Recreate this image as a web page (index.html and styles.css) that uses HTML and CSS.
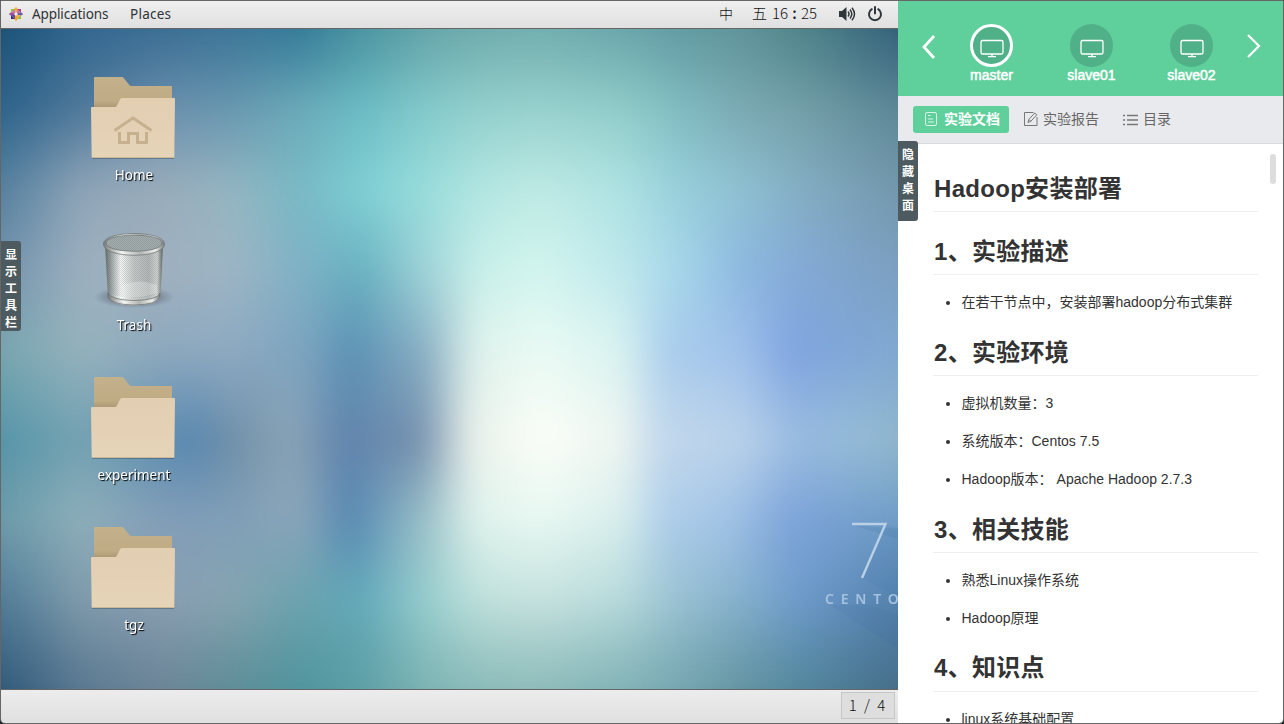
FILE: index.html
```html
<!DOCTYPE html>
<html lang="zh-CN">
<head>
<meta charset="utf-8">
<title>Hadoop安装部署</title>
<link rel="stylesheet" href="styles.css">
</head>
<body>
<svg class="defs" width="0" height="0">
  <defs>
    <linearGradient id="fb" x1="0" y1="0" x2="0" y2="1"><stop offset="0" stop-color="#c3b18b"/><stop offset=".7" stop-color="#bfab84"/><stop offset="1" stop-color="#a3906c"/></linearGradient>
    <linearGradient id="ff" x1="0" y1="0" x2="0" y2="1"><stop offset="0" stop-color="#e2ceb1"/><stop offset="1" stop-color="#e6d4b9"/></linearGradient>
    <linearGradient id="metal" x1="0" x2="1"><stop offset="0" stop-color="#5f6a69"/><stop offset=".12" stop-color="#a5acab"/><stop offset=".27" stop-color="#f6f8f7"/><stop offset=".5" stop-color="#c5cac9"/><stop offset=".75" stop-color="#b3b9b8"/><stop offset=".9" stop-color="#d2d5d4"/><stop offset="1" stop-color="#59625f"/></linearGradient>
    <linearGradient id="rim" x1="0" x2="1"><stop offset="0" stop-color="#777d7c"/><stop offset=".3" stop-color="#f4f4f2"/><stop offset=".6" stop-color="#b4b6b4"/><stop offset=".85" stop-color="#ececea"/><stop offset="1" stop-color="#767b7a"/></linearGradient>
    <pattern id="mesh" width="2" height="2" patternUnits="userSpaceOnUse"><rect width="1" height="1" fill="#59605f"/><rect x="1" y="1" width="1" height="1" fill="#59605f"/></pattern>
    <radialGradient id="shade"><stop offset="0" stop-color="#223" stop-opacity=".6"/><stop offset=".7" stop-color="#334" stop-opacity=".22"/><stop offset="1" stop-color="#334" stop-opacity="0"/></radialGradient>
    <symbol id="folder" viewBox="0 0 84 82">
      <path d="M1 81.500h82" stroke="#35465a" stroke-opacity=".4"/>
      <path d="M4 0h27q1 0 1.700 1l5.600 7q.7 1 1.700 1h40q1 0 1 1v24H3V1q0-1 1-1z" fill="url(#fb)"/>
      <path d="M1 30h23q1 0 1.700-1l3.600-7q.7-1 1.700-1h52q1 0 1 1l-.7 58q0 1-1 1H1.700q-1 0-1-1L0 31q0-1 1-1z" fill="url(#ff)"/>
      <path d="M1 80.500h82" stroke="#cdb997"/>
    </symbol>
    <symbol id="monitor" viewBox="0 0 24 20">
      <rect x="1" y="1.500" width="22" height="13.500" rx="1.500" fill="none" stroke="#fff" stroke-width="1.300"/>
      <path d="M12 15v2.500M8 17.700h8" fill="none" stroke="#fff" stroke-width="1.300"/>
    </symbol>
  </defs>
</svg>
<div class="window">
  <section class="remote">
    <header class="menubar">
      <svg class="logo" width="16" height="16" viewBox="0 0 16 16">
        <path d="M8 7L5.500 4 8 .8 10.500 4z" fill="#efb32d"/><path d="M8 9l-2.500 3L8 15.200 10.500 12z" fill="#efa724"/>
        <path d="M7 8L4 5.500.8 8 4 10.500z" fill="#a04f9b"/><path d="M9 8l3-2.500L15.200 8 12 10.500z" fill="#6a5fa5"/>
        <path d="M3 3h4L3 7z" fill="#91c33a"/><path d="M13 3v4L9 3z" fill="#b63a8c"/><path d="M3 13V9l4 4z" fill="#3b2d7f"/><path d="M13 13H9l4-4z" fill="#92bd47"/>
        <path d="M3 7l4-4v4zM9 3v4h4z" fill="#c86fb0"/><path d="M3 9h4v4z" fill="#5c4c9b"/><path d="M9 13V9h4z" fill="#e9b04a"/>
      </svg>
      <span class="menu apps">Applications</span>
      <span class="menu">Places</span>
      <span class="ime">中</span>
      <span class="clock"><span>五</span><span class="hour">16</span><span class="colon">:</span><span>25</span></span>
      <svg class="volume" width="18" height="16" viewBox="0 0 18 16"><path d="M1 5h3l4.500-4v14L4 11H1z" fill="#30373a"/><path d="M10 5.500q2 2.500 0 5M12 3.500q3.600 4.500 0 9M14 1.700q5 6.300 0 12.600" fill="none" stroke="#30373a" stroke-width="1.500"/></svg>
      <svg class="power" width="16" height="16" viewBox="0 0 16 16"><path d="M4.800 3.200a6 6 0 1 0 6.400 0M8 1v6.500" fill="none" stroke="#30373a" stroke-width="2" stroke-linecap="round"/></svg>
    </header>
    <main class="desktop">
      <div class="wall w0"></div><div class="wall w1"></div><div class="wall w2"></div>
      <div class="wall w3"></div><div class="wall w4"></div><div class="wall w5"></div>
      <div class="wall w6"></div><div class="wall w7"></div><div class="wall w8"></div>
      <div class="soften"></div>
      <div class="icons">
        <div class="item"><svg width="84" height="82"><use href="#folder"/><path d="M23.500 53.500L42 41l18.500 12.500M28.500 55v10.500h9V56.500h9v9h9V55" fill="none" stroke="#c6b18e" stroke-width="3"/></svg><span>Home</span></div>
        <div class="item"><svg width="84" height="82" viewBox="0 0 84 82">
          <ellipse cx="43" cy="70" rx="40" ry="11" fill="url(#shade)"/>
          <path d="M14 17L17 70q3 8 26 8.500Q66 78 69.500 70L72 17z" fill="url(#metal)"/>
          <path d="M14 20L17 66q26 10 52 0L72 20q-29 10-58 0z" fill="url(#mesh)" opacity=".2"/>
          <path d="M17 66q3 7 26 7.500 24-.5 26-7.500l-.3 4.500Q66 77.500 43 78q-23-.5-26-7.500z" fill="url(#rim)" stroke="#626a69" stroke-width=".7"/>
          <path d="M31 58q18-7 35 0v8q-18 6-35 4z" fill="#fff" opacity=".25"/>
          <ellipse cx="43" cy="17" rx="29.500" ry="9.500" fill="#a3acad"/>
          <ellipse cx="43" cy="17" rx="29.500" ry="9.500" fill="url(#mesh)" opacity=".2"/>
          <path d="M12.500 17c0-14 61-14 61 0 0 15-61 15-61 0zm2.500-1c0 11 56 11 56 0 0-10.500-56-10.500-56 0z" fill="url(#rim)" stroke="#666e6d" stroke-width=".7" fill-rule="evenodd"/>
        </svg><span>Trash</span></div>
        <div class="item"><svg width="84" height="82"><use href="#folder"/></svg><span>experiment</span></div>
        <div class="item"><svg width="84" height="82"><use href="#folder"/></svg><span>tgz</span></div>
      </div>
      <div class="brand">
        <svg width="78" height="150" viewBox="820 515 78 150">
          <path d="M852 524l34 1 12 3v70l-36-20 24-53z" fill="#315f98" opacity=".07"/>
          <path d="M852 525l46 4v10z" fill="#315f98" opacity=".12"/>
          <path d="M830 605h40l28 10v34z" fill="#315f98" opacity=".08"/>
          <path d="M852 524h33.500L862 578" fill="none" stroke="#b9d0e5" stroke-width="2.400"/>
        </svg>
        <span>CENTO</span>
      </div>
    </main>
    <footer class="taskbar"><span class="pager">1 / 4</span></footer>
    <div class="toggle tools">显<br>示<br>工<br>具<br>栏</div>
  </section>
  <aside class="panel">
    <nav class="hosts">
      <svg class="prev" width="16" height="28" viewBox="0 0 16 28"><path d="M14 3L4 14l10 11" fill="none" stroke="#fff" stroke-width="2.800"/></svg>
      <div class="host on"><i><svg width="24" height="20"><use href="#monitor"/></svg></i><span>master</span></div>
      <div class="host"><i><svg width="24" height="20"><use href="#monitor"/></svg></i><span>slave01</span></div>
      <div class="host"><i><svg width="24" height="20"><use href="#monitor"/></svg></i><span>slave02</span></div>
      <svg class="next" width="16" height="28" viewBox="0 0 16 28"><path d="M3 3l11 11L3 25" fill="none" stroke="#fff" stroke-width="2.200"/></svg>
    </nav>
    <nav class="tabs">
      <a class="tab active"><svg width="12" height="14" viewBox="0 0 12 14"><rect x=".5" y=".5" width="11" height="13" rx="1.500"/><path d="M3 3.500h2.500M3 7h5M3 10h6"/></svg><span>实验文档</span></a>
      <a class="tab report"><svg width="14" height="14" viewBox="0 0 14 14"><path d="M9.500 .5h-9v13h12.500V5M4 10.500l.7-3L10.800 1l2 1.800-6 6.500zM5 7.500l1.800 1.800"/></svg><span>实验报告</span></a>
      <a class="tab toc"><svg width="15" height="12" viewBox="0 0 15 12"><path d="M0 1.500h2M0 6h2M0 10.500h2M4 1.500h11M4 6h11M4 10.500h11" stroke-width="1.500"/></svg><span>目录</span></a>
    </nav>
    <article class="doc">
      <h2>Hadoop安装部署</h2>
      <h2>1、实验描述</h2>
      <ul><li>在若干节点中，安装部署hadoop分布式集群</li></ul>
      <h2>2、实验环境</h2>
      <ul><li>虚拟机数量：3</li><li>系统版本：Centos 7.5</li><li>Hadoop版本：<span class="ver">Apache Hadoop 2.7.3</span></li></ul>
      <h2>3、相关技能</h2>
      <ul><li>熟悉Linux操作系统</li><li>Hadoop原理</li></ul>
      <h2 class="last">4、知识点</h2>
      <ul><li>linux系统基础配置</li></ul>
    </article>
    <div class="thumb"></div>
    <div class="toggle hide">隐<br>藏<br>桌<br>面</div>
  </aside>
</div>
</body>
</html>
```

FILE: styles.css
```css
* { box-sizing: border-box; }
body { margin: 0; background: #24282b; overflow: hidden; font-family: "Liberation Sans", "Noto Sans CJK SC", sans-serif; font-size: 14px; color: #333; }
svg { display: block; flex: none; }
.defs { position: absolute; }
.window { display: grid; grid-template-columns: 897px 385px; width: 1284px; height: 724px; border: 1px solid #666; border-radius: 0 0 5px 5px; overflow: hidden; }

.remote { position: relative; display: flex; flex-direction: column; height: 722px; min-width: 0; }
.menubar { display: flex; align-items: center; height: 28px; padding: 0 15px 0 7px; border-bottom: 1px solid #666; background: linear-gradient(#efefef, #e0e0e0); color: #2e3436; font-family: "Noto Sans", "Noto Sans CJK SC", sans-serif; }
.logo { margin-bottom: 2px; }
.menu { font-size: 13.5px; letter-spacing: -.1px; padding-bottom: 1px; }
.menu + .menu { letter-spacing: .25px; }
.apps { width: 98px; margin-left: 8px; }
.ime { margin-left: auto; margin-right: 1px; padding-bottom: 4px; color: #111; font: 300 14px "Noto Sans CJK SC", sans-serif; }
.clock { display: flex; width: 70px; margin: 0 16px 0 18px; padding-bottom: 5px; color: #111; font: 300 15px "Noto Sans CJK SC", sans-serif; }
.hour { margin-left: 5px; }
.colon { width: 13px; text-align: center; font-weight: 500; }
.volume { margin-right: 11px; }
.volume, .power { margin-bottom: 2px; }
.desktop { display: grid; grid-template: 100% / 100%; flex: 1; min-height: 0; overflow: hidden; }
.desktop > * { grid-area: 1 / 1; }
.soften { backdrop-filter: blur(14px); }

.w0 { background: linear-gradient(90deg, #1b5277 0, #33678f 80px, #3a6d93 160px, #3d7597 230px, #347a98 300px, #4a93a0 360px, #66a5a9 430px, #6fabac 480px, #72aeae 540px, #6aa5ab 620px, #629ba1 680px, #5f9499 740px, #4f8489 800px, #33607a 897px); }
.w1 { background: linear-gradient(90deg, #2d638c 0, #50799a 80px, #6c90ae 160px, #6998b0 230px, #6cabb9 300px, #6bbcc4 360px, #86cbcc 430px, #93d0cd 480px, #98d2cf 540px, #92cdca 620px, #80bcc1 680px, #7caab3 740px, #74a0a8 800px, #5c8796 897px); mask-image: linear-gradient(transparent 0, #000 81px); }
.w2 { background: linear-gradient(90deg, #54809f 0, #8fa5b8 80px, #9aacba 160px, #95b5c1 230px, #78b9c5 300px, #7fd0d5 360px, #9bdedc 430px, #b3e6e2 480px, #bfeae4 540px, #aee3e3 620px, #98cfdb 680px, #8fc1d2 740px, #84aec4 800px, #7397ac 897px); mask-image: linear-gradient(transparent 81px, #000 161px); }
.w3 { background: linear-gradient(90deg, #7393ad 0, #9db0bf 80px, #a0b0bf 160px, #9eb5c4 230px, #7fb1c5 300px, #67b1c0 360px, #a4d6da 430px, #c9f0ea 480px, #d3f5ef 540px, #bfe8ec 620px, #a6d6ea 680px, #8db8e0 740px, #84aad6 800px, #7b9fc0 897px); mask-image: linear-gradient(transparent 161px, #000 241px); }
.w4 { background: linear-gradient(90deg, #78a7b0 0, #96b2bd 80px, #8ea8bd 160px, #8eaac2 230px, #7ca4bf 305px, #5a91b4 350px, #8bb0c4 425px, #dff2ec 475px, #eafaf4 540px, #d9f3f0 620px, #aacdec 665px, #9fc1ea 740px, #7fa4e1 790px, #80a9d0 897px); mask-image: linear-gradient(transparent 241px, #000 321px); }
.w5 { background: linear-gradient(90deg, #5495a9 0, #74a2b2 80px, #5686b0 190px, #7190a8 235px, #8ba4b6 290px, #6083ad 345px, #7590ad 420px, #e9f0ea 470px, #fcfef8 540px, #eef5f0 620px, #c3d8ec 660px, #bad2ea 740px, #98bbe0 800px, #96bcd6 860px, #8fb5cb 897px); mask-image: linear-gradient(transparent 321px, #000 411px); }
.w6 { background: linear-gradient(90deg, #6c9baa 0, #8fafba 80px, #839eb8 160px, #809fb8 230px, #8aa6ba 300px, #5588b2 350px, #9cc2c9 425px, #dff2ec 475px, #e8f8f2 540px, #d8eeec 620px, #adcdea 665px, #a2c4e6 725px, #7da4da 790px, #6f9cc6 897px); mask-image: linear-gradient(transparent 411px, #000 491px); }
.w7 { background: linear-gradient(90deg, #4f7c98 0, #809bab 80px, #8a9eb2 160px, #86a4b0 230px, #6ba3ae 300px, #62aaba 360px, #9bd0cf 430px, #bfe0dc 480px, #c6e2df 540px, #b7dadb 620px, #98c0d2 680px, #85b0cc 740px, #6d9acb 800px, #5380ac 897px); mask-image: linear-gradient(transparent 491px, #000 571px); }
.w8 { background: linear-gradient(90deg, #2f5879 0, #587790 80px, #6b8496 160px, #5d8c96 230px, #4f949d 300px, #5d9ea4 360px, #7db3b3 430px, #88b9b7 480px, #8bbab8 540px, #80b1b5 620px, #74a5ae 680px, #6393a0 740px, #52869a 800px, #456d88 897px); mask-image: linear-gradient(transparent 571px, #000 660px); }

.icons { z-index: 1; display: flex; flex-direction: column; gap: 42px; width: 264px; padding-top: 48px; }
.item { display: flex; flex-direction: column; align-items: center; gap: 6px; height: 108px; font: 13.5px/20px "Noto Sans", sans-serif; color: #fff; text-shadow: 1px 1px 1px #000; }
.item span { padding-left: 2px; }
.brand { z-index: 1; display: flex; flex-direction: column; justify-self: end; width: 78px; padding-top: 486px; color: #a4c2de; font: 600 14px/18px "Noto Sans", sans-serif; }
.brand span { margin: -75px 0 0 5px; letter-spacing: 6.8px; white-space: nowrap; }

.taskbar { display: flex; justify-content: flex-end; height: 34px; padding: 2px 3px 4px 0; border-top: 1px solid #666; background: linear-gradient(#ececec, #e0e0e0); }
.pager { width: 54px; height: 27px; padding-right: 2px; border: 1px solid #c6c6c6; background: #dedede; text-align: center; color: #111; font: 300 15px/24px "Noto Sans CJK SC", sans-serif; word-spacing: 4px; }

.toggle { position: absolute; left: 0; width: 20px; padding-top: 4px; background: #4d5b60; color: #fff; font: bold 12px/17px "Noto Sans CJK SC", sans-serif; text-align: center; border-radius: 0 3px 3px 0; }
.tools { top: 240px; height: 90px; }
.hide { top: 140px; height: 80px; }

.panel { position: relative; display: flex; flex-direction: column; height: 722px; background: #fff; overflow: hidden; }
.hosts { display: flex; align-items: flex-start; flex: none; height: 95px; padding: 23px 0 0 22px; background: #5fcf9c; }
.prev { margin-top: 9px; }
.next { margin-top: 8px; margin-left: 4px; }
.host { display: flex; flex-direction: column; align-items: center; width: 100px; line-height: 16px; color: #fff; -webkit-text-stroke: .5px #fff; }
.host span { padding-left: 1px; }
.prev + .host { margin-left: 5px; }
.host i { display: flex; justify-content: center; width: 43px; height: 43px; padding: 15px 0 0 1px; border-radius: 50%; background: #50b088; }
.host.on i { padding-top: 12px; border: 3px solid #fff; }
.tabs { display: flex; flex: none; height: 48px; padding: 10px 15px; background: #e9eaee; border-bottom: 1px solid #d9dadd; }
.tab { display: flex; align-items: center; height: 27px; color: #666; }
.tab span { padding-bottom: 4px; }
.tab svg { fill: none; stroke: #777; margin-bottom: 2px; }
.active { width: 96px; padding-left: 12px; gap: 7px; border-radius: 3px; background: #5fcf9c; color: #fff; font-weight: bold; }
.active svg { stroke: #d9f5e8; }
.report { margin-left: 15px; gap: 5px; }
.toc { margin-left: 24px; gap: 5px; }
.toc svg { margin-bottom: 0; }
.doc { flex: 1; min-height: 0; padding: 5px 25px 0 35px; overflow: hidden; }
h2 { margin: 17px 0 0; padding: 1px 0 8px; border-bottom: 1px solid #eee; font-size: 24px; line-height: 28px; letter-spacing: .3px; font-weight: bold; height: 38px; text-indent: 1px; }
h2:first-child { margin-top: 25px; }
h2 + h2 { margin-top: 25px; }
.last { padding-top: 0; }
ul { list-style: none; margin: 8px 0 0; padding: 0 0 0 13px; }
li { display: flex; align-items: center; height: 38px; padding-bottom: 2px; white-space: nowrap; }
li::before { content: ""; width: 4px; height: 4px; margin: 3px 11.5px 0 0; border-radius: 50%; background: #333; }
.ver { margin: 2px 0 0 4px; }
.thumb { position: absolute; right: 7px; top: 153px; width: 6px; height: 30px; border-radius: 3px; background: #ddd; }
```
